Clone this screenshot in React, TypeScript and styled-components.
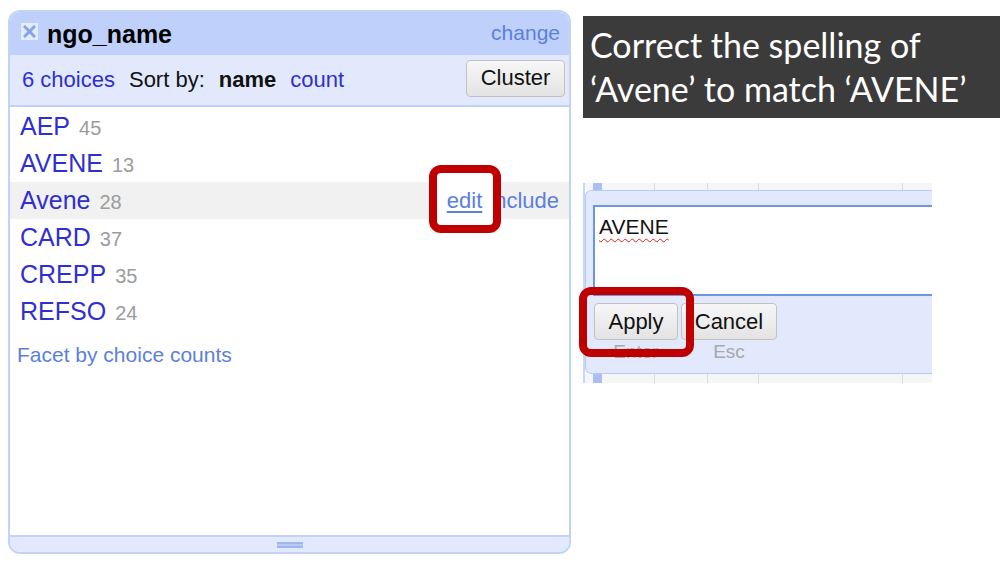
import React from "react";
import styled, { createGlobalStyle } from "styled-components";

const Global = createGlobalStyle`
  html, body { margin: 0; padding: 0; background: #ffffff; }
  body {
    width: 1000px;
    height: 567px;
    overflow: hidden;
    font-family: "Liberation Sans", Arial, sans-serif;
  }
`;

const LINK = "#2f2fcf";
const SOFT_LINK = "#5b80dc";

const Page = styled.div`
  position: relative;
  width: 1000px;
  height: 567px;
  box-sizing: border-box;
  padding: 10px 0 0 8px;
  display: flex;
  align-items: flex-start;
  gap: 12px;
`;

const Panel = styled.section`
  width: 563px;
  height: 544px;
  box-sizing: border-box;
  border: 2px solid #c3d3f8;
  border-radius: 12px;
  display: flex;
  flex-direction: column;
  overflow: hidden;
  background: #ffffff;
`;

const Header = styled.header`
  height: 43px;
  flex-shrink: 0;
  background: #bfd1fb;
  display: flex;
  align-items: center;
  padding: 2px 9px 0 11px;
  box-sizing: border-box;
`;

const CloseBox = styled.span`
  width: 17px;
  height: 17px;
  background: #e4ebfd;
  display: flex;
  align-items: center;
  justify-content: center;
  margin-top: -6px;
`;

const Title = styled.h1`
  margin: 0 0 0 9px;
  font-size: 25px;
  font-weight: bold;
  color: #000;
`;

const HeaderLink = styled.span`
  margin-left: auto;
  font-size: 21px;
  color: ${SOFT_LINK};
  margin-top: -4px;
`;

const Controls = styled.div`
  height: 52px;
  flex-shrink: 0;
  box-sizing: border-box;
  background: #e2e9fd;
  border-bottom: 2px solid #bfd1fb;
  display: flex;
  align-items: center;
  padding: 0 4px 0 12px;
  gap: 14px;
  font-size: 22px;
`;

const ControlText = styled.span<{ $bold?: boolean; $link?: boolean }>`
  font-weight: ${(p) => (p.$bold ? "bold" : "normal")};
  color: ${(p) => (p.$link ? LINK : "#111")};
`;

const Button = styled.button<{ $w: number }>`
  width: ${(p) => p.$w}px;
  height: 37px;
  box-sizing: border-box;
  border: 1px solid #c2c2c2;
  border-radius: 4px;
  background: linear-gradient(#f7f7f7, #e3e3e3);
  font-family: "Liberation Sans", Arial, sans-serif;
  font-size: 22px;
  color: #111;
  padding: 0;
  display: flex;
  align-items: center;
  justify-content: center;
`;

const ClusterButton = styled(Button)`
  margin-left: auto;
  margin-top: -4px;
`;

const List = styled.div`
  flex: 1;
  padding-top: 1px;
  display: flex;
  flex-direction: column;
`;

const Row = styled.div<{ $hover?: boolean }>`
  height: 37px;
  flex-shrink: 0;
  display: flex;
  align-items: center;
  padding: 0 10px 0 10px;
  background: ${(p) => (p.$hover ? "#f1f1f1" : "transparent")};
`;

const ChoiceName = styled.span`
  font-size: 25px;
  color: ${LINK};
`;

const ChoiceCount = styled.span`
  font-size: 20px;
  color: #9c9c9c;
  margin-left: 9px;
  margin-top: 3px;
`;

const RowActions = styled.span`
  margin-left: auto;
  display: flex;
  gap: 7px;
  font-size: 22px;
  color: ${SOFT_LINK};
`;

const EditLink = styled.span`
  position: relative;
  z-index: 2;
  text-decoration: underline;
  text-underline-offset: 3px;
`;

const FacetLink = styled.div`
  margin: 13px 0 0 7px;
  font-size: 21px;
  color: ${SOFT_LINK};
`;

const Footer = styled.footer`
  height: 17px;
  flex-shrink: 0;
  box-sizing: border-box;
  background: #e2e9fd;
  border-top: 2px solid #c3d3f8;
  display: flex;
  align-items: center;
  justify-content: center;
`;

const Grip = styled.span`
  width: 26px;
  height: 6px;
  border-top: 2px solid #9fb6ee;
  border-bottom: 2px solid #9fb6ee;
  box-sizing: border-box;
  background: #b7c9f4;
`;

const RightColumn = styled.div`
  display: flex;
  flex-direction: column;
  padding-top: 6px;
`;

const Note = styled.div`
  width: 417px;
  height: 102px;
  box-sizing: border-box;
  background: #3b3b3b;
  color: #ffffff;
  font-family: Lato, "Open Sans", sans-serif;
  font-size: 34px;
  line-height: 44px;
  padding: 7px 0 0 7px;
`;

const Snapshot = styled.div`
  margin-top: 65px;
  width: 349px;
  height: 200px;
  box-sizing: border-box;
  border-left: 2px solid #c8d6f7;
  display: flex;
  flex-direction: column;
  overflow: hidden;
  background: #ffffff;
`;

const GridStrip = styled.div<{ $h: number }>`
  height: ${(p) => p.$h}px;
  flex-shrink: 0;
  display: flex;
  background: #f6f6f6;
`;

const GridCell = styled.div<{ $w: number; $mark?: boolean; $line?: boolean }>`
  width: ${(p) => p.$w}px;
  flex-shrink: 0;
  box-sizing: border-box;
  background: ${(p) => (p.$mark ? "#a9bff3" : "transparent")};
  border-right: ${(p) => (p.$line ? "1px solid #d9d9d9" : "none")};
`;

const Popup = styled.div`
  flex: 1;
  background: #e2e9fd;
  border: 1px solid #b8cbf5;
  border-right: none;
  border-radius: 6px 0 0 6px;
  padding: 14px 0 0 7px;
  display: flex;
  flex-direction: column;
`;

const TextBox = styled.div`
  width: 400px;
  height: 91px;
  box-sizing: border-box;
  border: 2px solid #6f96e2;
  background: #ffffff;
  padding: 8px 4px 0 4px;
  font-size: 21px;
  line-height: 24px;
  color: #111;
`;

const Misspelt = styled.span`
  text-decoration: underline wavy #e02020;
  text-decoration-thickness: 1px;
  text-underline-offset: 4px;
`;

const ButtonRow = styled.div`
  display: flex;
  gap: 3px;
  margin-top: 7px;
  margin-left: 1px;
`;

const ButtonGroup = styled.div`
  display: flex;
  flex-direction: column;
  align-items: center;
`;

const KeyHint = styled.span`
  font-size: 19px;
  line-height: 23px;
  color: #a8a8a8;
`;

const Callout = styled.div<{ $x: number; $y: number; $w: number; $h: number; $fill?: boolean }>`
  position: absolute;
  left: ${(p) => p.$x}px;
  top: ${(p) => p.$y}px;
  width: ${(p) => p.$w}px;
  height: ${(p) => p.$h}px;
  box-sizing: border-box;
  border: 8px solid #c00000;
  border-radius: 12px;
  background: ${(p) => (p.$fill ? "#ffffff" : "transparent")};
  z-index: 1;
`;

const choices = [
  { name: "AEP", count: 45 },
  { name: "AVENE", count: 13 },
  { name: "Avene", count: 28, hover: true },
  { name: "CARD", count: 37 },
  { name: "CREPP", count: 35 },
  { name: "REFSO", count: 24 },
];

const CloseIcon = () => (
  <svg width="13" height="13" viewBox="0 0 13 13">
    <path d="M2 2 L11 11 M11 2 L2 11" stroke="#87a4ea" strokeWidth="3" strokeLinecap="square" />
  </svg>
);

const gridCells = (
  <>
    <GridCell $w={8} />
    <GridCell $w={9} $mark />
    <GridCell $w={53} $line />
    <GridCell $w={53} $line />
    <GridCell $w={51} $line />
    <GridCell $w={144} $line />
    <GridCell $w={40} />
  </>
);

export default function App() {
  return (
    <>
      <Global />
      <Page>
        <Panel>
          <Header>
            <CloseBox>
              <CloseIcon />
            </CloseBox>
            <Title>ngo_name</Title>
            <HeaderLink>change</HeaderLink>
          </Header>
          <Controls>
            <ControlText $link>6 choices</ControlText>
            <ControlText>Sort by:</ControlText>
            <ControlText $bold>name</ControlText>
            <ControlText $link>count</ControlText>
            <ClusterButton $w={99}>Cluster</ClusterButton>
          </Controls>
          <List>
            {choices.map((c) => (
              <Row key={c.name} $hover={c.hover}>
                <ChoiceName>{c.name}</ChoiceName>
                <ChoiceCount>{c.count}</ChoiceCount>
                {c.hover && (
                  <RowActions>
                    <EditLink>edit</EditLink>
                    <span>include</span>
                  </RowActions>
                )}
              </Row>
            ))}
            <FacetLink>Facet by choice counts</FacetLink>
          </List>
          <Footer>
            <Grip />
          </Footer>
        </Panel>
        <RightColumn>
          <Note>
            Correct the spelling of
            <br />
            ‘Avene’ to match ‘AVENE’
          </Note>
          <Snapshot>
            <GridStrip $h={7}>{gridCells}</GridStrip>
            <Popup>
              <TextBox>
                <Misspelt>AVENE</Misspelt>
              </TextBox>
              <ButtonRow>
                <ButtonGroup>
                  <Button $w={84}>Apply</Button>
                  <KeyHint>Enter</KeyHint>
                </ButtonGroup>
                <ButtonGroup>
                  <Button $w={96}>Cancel</Button>
                  <KeyHint>Esc</KeyHint>
                </ButtonGroup>
              </ButtonRow>
            </Popup>
            <GridStrip $h={9}>{gridCells}</GridStrip>
          </Snapshot>
        </RightColumn>
        <Callout $x={429} $y={165} $w={72} $h={68} $fill />
        <Callout $x={579} $y={287} $w={115} $h={70} />
      </Page>
    </>
  );
}
